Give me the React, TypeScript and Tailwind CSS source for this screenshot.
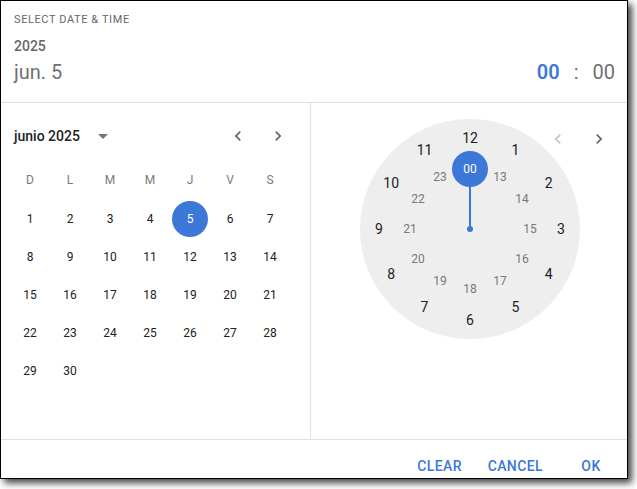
import React from 'react';

const BLUE = '#3b78d8';

const days: (number | null)[] = [...Array.from({ length: 30 }, (_, i) => i + 1)];
const weeks: (number | null)[][] = [];
for (let i = 0; i < days.length; i += 7) weeks.push(days.slice(i, i + 7));
while (weeks[weeks.length - 1].length < 7) weeks[weeks.length - 1].push(null);

const weekdays = ['D', 'L', 'M', 'M', 'J', 'V', 'S'];

const ChevronLeft = ({ className }: { className?: string }) => (
    <svg viewBox="0 0 24 24" className={className} width="20" height="20" fill="currentColor">
        <path d="M15.41 7.41 14 6l-6 6 6 6 1.41-1.41L10.83 12z" />
    </svg>
);

const ChevronRight = ({ className }: { className?: string }) => (
    <svg viewBox="0 0 24 24" className={className} width="20" height="20" fill="currentColor">
        <path d="M10 6 8.59 7.41 13.17 12l-4.58 4.59L10 18l6-6z" />
    </svg>
);

// place a number on the dial, angle in hours (0 = top)
const pos = (step: number, r: number) => {
    const a = (step * 30 * Math.PI) / 180;
    return { left: 110 + r * Math.sin(a) - 18, top: 110 - r * Math.cos(a) - 18 };
};

const Clock = () => {
    const outer = [12, 1, 2, 3, 4, 5, 6, 7, 8, 9, 10, 11];
    const inner = ['00', '13', '14', '15', '16', '17', '18', '19', '20', '21', '22', '23'];
    return (
        <div className="relative h-[220px] w-[220px] rounded-full bg-[#eeeeee]">
            {/* hand */}
            <div className="absolute left-[109px] top-[50px] h-[60px] w-[2px] bg-[#3b78d8]" />
            <div className="absolute left-[107px] top-[107px] h-[6px] w-[6px] rounded-full bg-[#3b78d8]" />
            {outer.map((n, i) => (
                <div key={n} className="absolute flex h-9 w-9 items-center justify-center text-[14px] text-[#212121]" style={pos(i, 91)}>
                    {n}
                </div>
            ))}
            {inner.map((n, i) =>
                i === 0 ? (
                    <div key={n} className="absolute flex h-9 w-9 items-center justify-center rounded-full bg-[#3b78d8] text-[12px] text-white" style={pos(i, 60)}>
                        {n}
                    </div>
                ) : (
                    <div key={n} className="absolute flex h-9 w-9 items-center justify-center text-[12px] text-[#787878]" style={pos(i, 60)}>
                        {n}
                    </div>
                )
            )}
        </div>
    );
};

const App = () => {
    return (
        <div className="h-[489px] w-[637px] bg-white font-['Roboto',sans-serif]">
            <div className="flex h-[479px] w-[628px] flex-col overflow-hidden border border-black bg-white shadow-[4px_4px_7px_rgba(0,0,0,0.75)]">
                {/* toolbar */}
                <div className="h-[102px] shrink-0 border-b border-[#e0e0e0] pl-[13px] pr-[12px] pt-[11px]">
                    <div className="text-[11px] uppercase leading-4 tracking-[0.6px] text-[#666]">Select date &amp; time</div>
                    <div className="mt-[8px] text-[14px] font-medium leading-5 text-[#666]">2025</div>
                    <div className="mt-[2px] flex h-7 items-center justify-between">
                        <span className="text-[20px] leading-7 text-[#707070]">jun. 5</span>
                        <div className="flex items-center gap-[14px] text-[20px] leading-7">
                            <span className="font-semibold text-[#3b78d8]">00</span>
                            <span className="text-[#707070]">:</span>
                            <span className="text-[#707070]">00</span>
                        </div>
                    </div>
                </div>

                {/* body */}
                <div className="flex h-[337px] shrink-0 border-b border-[#e0e0e0]">
                    <div className="w-[310px] shrink-0 border-r border-[#e0e0e0] pt-[18px]">
                        <div className="flex h-[30px] items-center pl-[13px] pr-[22px]">
                            <span className="text-[14px] font-medium text-[#212121]">junio 2025</span>
                            <svg width="10" height="5" viewBox="0 0 10 5" className="ml-[18px]">
                                <polygon points="0,0 10,0 5,5" fill="#757575" />
                            </svg>
                            <div className="ml-auto flex gap-[20px] text-[#666]">
                                <ChevronLeft />
                                <ChevronRight />
                            </div>
                        </div>
                        <div className="mt-[9px] pl-[9px]">
                            <div className="flex h-10">
                                {weekdays.map((d, i) => (
                                    <div key={i} className="flex w-10 items-center justify-center text-[12px] text-[#7a7a7a]">
                                        {d}
                                    </div>
                                ))}
                            </div>
                            {weeks.map((w, wi) => (
                                <div key={wi} className="flex h-[38px]">
                                    {w.map((d, di) => (
                                        <div key={di} className="flex w-10 items-center justify-center">
                                            {d !== null &&
                                                (d === 5 ? (
                                                    <div className="flex h-9 w-9 items-center justify-center rounded-full bg-[#3b78d8] text-[12px] text-white">{d}</div>
                                                ) : (
                                                    <div className="flex h-9 w-9 items-center justify-center text-[12px] text-[#212121]">{d}</div>
                                                ))}
                                        </div>
                                    ))}
                                </div>
                            ))}
                        </div>
                    </div>

                    <div className="relative flex-1 pl-[49px] pt-[16px]">
                        <Clock />
                        <div className="absolute left-[237px] top-[26px] flex gap-[21px]">
                            <ChevronLeft className="text-[#c4c4c4]" />
                            <ChevronRight className="text-[#666]" />
                        </div>
                    </div>
                </div>

                {/* actions */}
                <div className="flex justify-end gap-2 pr-[4px]">
                    {['Clear', 'Cancel', 'OK'].map((b) => (
                        <button key={b} className="mt-2 flex h-9 min-w-16 items-center justify-center px-2 text-[14px] font-medium uppercase tracking-[0.4px]" style={{ color: BLUE }}>
                            {b}
                        </button>
                    ))}
                </div>
            </div>
        </div>
    );
};

export default App;
